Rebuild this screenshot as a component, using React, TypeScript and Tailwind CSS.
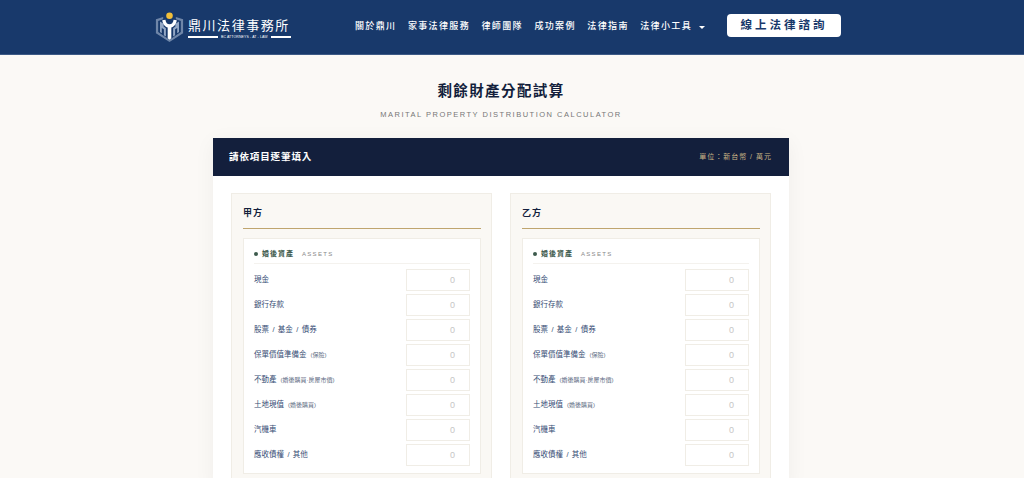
const font = { fontFamily: '"Liberation Sans", "Noto Sans CJK TC", sans-serif' };

function Logo() {
  return (
    <div className="flex items-center gap-[4px] w-[136px]">
      <svg width="29" height="32" viewBox="0 0 32 35" fill="none" className="shrink-0">
        <circle cx="16" cy="5" r="3.6" fill="#f2bf3a" />
        <path d="M1 9 L9 6.5 L9 9 L3.5 10.8 L3.5 23 L16 31.5 L28.500 23 L28.500 10.8 L23 9 L23 6.500 L31 9 L31 24.500 L16 34 L1 24.500Z" fill="#6f86a8" />
        <path d="M5.500 11.500 L9.500 14 V17 L12 19 V28 L9.800 26.500 V20 L7.500 18.500 V24.500 L5.500 23Z" fill="#93a7c4" />
        <path d="M26.500 11.500 L22.500 14 V17 L20 19 V28 L22.200 26.500 V20 L24.500 18.500 V24.500 L26.500 23Z" fill="#93a7c4" />
        <path d="M8 10 L11.500 9.500 C12 13 13.500 14.500 16 14.500 C18.500 14.500 20 13 20.500 9.500 L24 10 C23.500 14.500 20.500 17.500 18 18 V30 L16 31.500 L14 30 V18 C11.500 17.500 8.500 14.500 8 10Z" fill="#ffffff" />
      </svg>
      <div className="flex flex-col w-[103px]">
        <span className="text-[13px] pt-[1px] leading-[18px] text-white tracking-[1.55px] whitespace-nowrap">鼎川法律事務所</span>
        <div className="flex items-center gap-[3px]">
          <div className="h-[2px] w-[30px] bg-white" />
          <span className="text-[3.500px] leading-[4px] text-white whitespace-nowrap tracking-[0.1px]">BC ATTORNEYS - AT - LAW</span>
          <div className="h-[2px] flex-1 bg-white" />
        </div>
      </div>
    </div>
  );
}

const navItems = ["關於鼎川", "家事法律服務", "律師團隊", "成功案例", "法律指南"];

function Header() {
  return (
    <header className="h-[55px] shrink-0 bg-[#18396b] border-b border-[#3d5a86] flex items-center pl-[155px]">
      <Logo />
      <nav className="flex items-center gap-[11.500px] ml-[64px] text-white text-[9px] font-medium tracking-[1.350px] whitespace-nowrap">
        {navItems.map((n) => (
          <span key={n}>{n}</span>
        ))}
        <span className="flex items-center">
          法律小工具
          <span className="ml-[7px] w-0 h-0 border-x-[3px] border-x-transparent border-t-[3px] border-t-white" />
        </span>
      </nav>
      <button className="ml-[22px] mb-[3px] w-[114px] h-[23px] bg-white rounded-[4px] text-[#18396b] text-[11.500px] font-bold tracking-[3px] leading-[23px] whitespace-nowrap">
        線上法律諮詢
      </button>
    </header>
  );
}

const rows: [string, string?][] = [
  ["現金"],
  ["銀行存款"],
  ["股票 / 基金 / 債券"],
  ["保單價值準備金", "(保險)"],
  ["不動產", "(婚後購買·房屋市價)"],
  ["土地現值", "(婚後購買)"],
  ["汽機車"],
  ["應收債權 / 其他"],
];

function Party({ name }: { name: string }) {
  return (
    <div className="flex-1 min-w-0 bg-[#faf8f4] border border-[#f0ede6] pl-[11px] pr-[10px] pt-[10px] pb-[12px]">
      <h3 className="text-[9px] leading-[18px] font-bold text-[#131f3c] tracking-[1px] pb-[6px] border-b border-[#bfa56e]">{name}</h3>
      <div className="mt-[9px] bg-white border border-[#f0ede6] px-[10px] pt-[8px] pb-[7px]">
        <div className="flex items-center h-[17px] border-b border-[#f4f2ee] pb-[2px]">
          <span className="w-[4px] h-[4px] rounded-full bg-[#3d5a4c] mr-[4px]" />
          <span className="text-[7px] font-bold text-[#3d5a4c] tracking-[1px]">婚後資產</span>
          <span className="ml-[8px] text-[6px] text-[#888888] tracking-[1.300px]">ASSETS</span>
        </div>
        <div className="flex flex-col gap-[3px] mt-[5px]">
          {rows.map(([label, note]) => (
            <div key={label} className="flex items-center justify-between h-[22px]">
              <span className="text-[7.500px] text-[#364c74] whitespace-nowrap [word-spacing:1.300px]">
                {label}
                {note && <span className="ml-[4px] text-[6px] text-[#5c6a82]">{note}</span>}
              </span>
              <div className="w-[64px] h-[22px] bg-white border border-[#f0ede6] text-right pr-[14px] text-[9px] leading-[20px] text-[#c6c6c6]">0</div>
            </div>
          ))}
        </div>
      </div>
    </div>
  );
}

export default function App() {
  return (
    <div style={font} className="h-screen overflow-hidden bg-[#fbf9f6] flex flex-col">
      <Header />
      <main className="w-[1002px] flex flex-col items-center">
        <h1 className="mt-[25px] text-[14.500px] leading-[22px] font-bold text-[#131f3c] tracking-[1.400px]">剩餘財產分配試算</h1>
        <p className="mt-[7px] text-[7.500px] leading-[12px] text-[#777777] tracking-[1.500px]">MARITAL PROPERTY DISTRIBUTION CALCULATOR</p>
        <section className="mt-[17px] w-[576px] bg-white shadow-[0_4px_20px_rgba(0,0,0,0.05)]">
          <div className="h-[38px] bg-[#131f3c] flex items-center justify-between pl-[16px] pr-[17px]">
            <span className="text-[9.500px] font-bold text-white tracking-[0.900px]">請依項目逐筆填入</span>
            <span className="text-[7px] text-[#c9b486] tracking-[1px]">單位：新台幣 / 萬元</span>
          </div>
          <div className="flex gap-[18px] px-[18px] pt-[17px]">
            <Party name="甲方" />
            <Party name="乙方" />
          </div>
        </section>
      </main>
    </div>
  );
}
